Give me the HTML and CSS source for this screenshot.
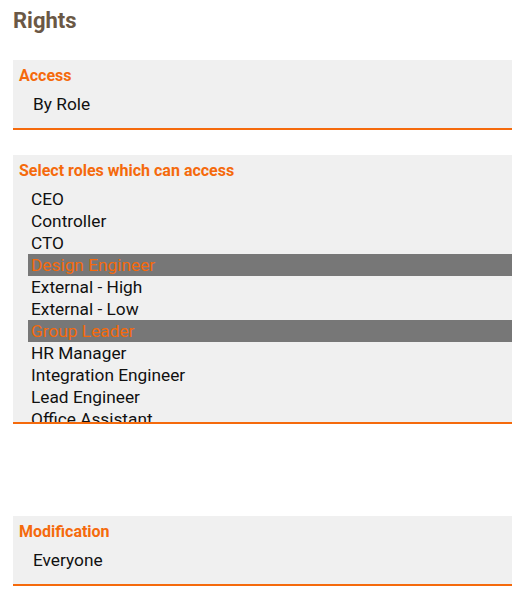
FILE: index.html
```html
<!DOCTYPE html>
<html lang="en">
<head>
<meta charset="utf-8">
<title>Rights</title>
<link rel="stylesheet" href="styles.css">
</head>
<body>
<div class="page">
  <h1 class="title">Rights</h1>

  <div class="field">
    <div class="field-label">Access</div>
    <div class="field-value">By Role</div>
  </div>

  <div class="field field-list">
    <div class="field-label">Select roles which can access</div>
    <div class="listbox">
      <div class="option">CEO</div>
      <div class="option">Controller</div>
      <div class="option">CTO</div>
      <div class="option selected">Design Engineer</div>
      <div class="option">External - High</div>
      <div class="option">External - Low</div>
      <div class="option selected">Group Leader</div>
      <div class="option">HR Manager</div>
      <div class="option">Integration Engineer</div>
      <div class="option">Lead Engineer</div>
      <div class="option">Office Assistant</div>
    </div>
  </div>

  <div class="field field-mod">
    <div class="field-label">Modification</div>
    <div class="field-value">Everyone</div>
  </div>
</div>
</body>
</html>
```

FILE: styles.css
```css
html, body {
  margin: 0;
  padding: 0;
  background: #ffffff;
  overflow: hidden;
}

.page {
  padding: 8px 0 0 13px;
  font-family: Roboto, "Liberation Sans", sans-serif;
  color: #111111;
}

.title {
  margin: 0;
  font-size: 22px;
  line-height: 26px;
  font-weight: 700;
  color: #6b5845;
}

.field {
  margin-top: 25px;
  background: #f0f0f0;
  border-bottom: 2px solid #f56a0c;
  padding: 7px 0 13px 6px;
}

.title + .field {
  margin-top: 26px;
}

.field-label {
  font-size: 16px;
  line-height: 18px;
  font-weight: 700;
  color: #f56a0c;
}

.field-value {
  margin-top: 8px;
  padding-left: 14px;
  font-size: 17.3px;
  line-height: 22px;
}

.field-list {
  padding-bottom: 0;
}

.listbox {
  margin-top: 8px;
  margin-left: 9px;
  height: 234px;
  overflow: hidden;
}

.option {
  padding-left: 3px;
  font-size: 17.3px;
  line-height: 22px;
  white-space: nowrap;
}

.option.selected {
  background: #777777;
  color: #f56a0c;
}

.field-mod {
  margin-top: 92px;
}
```
